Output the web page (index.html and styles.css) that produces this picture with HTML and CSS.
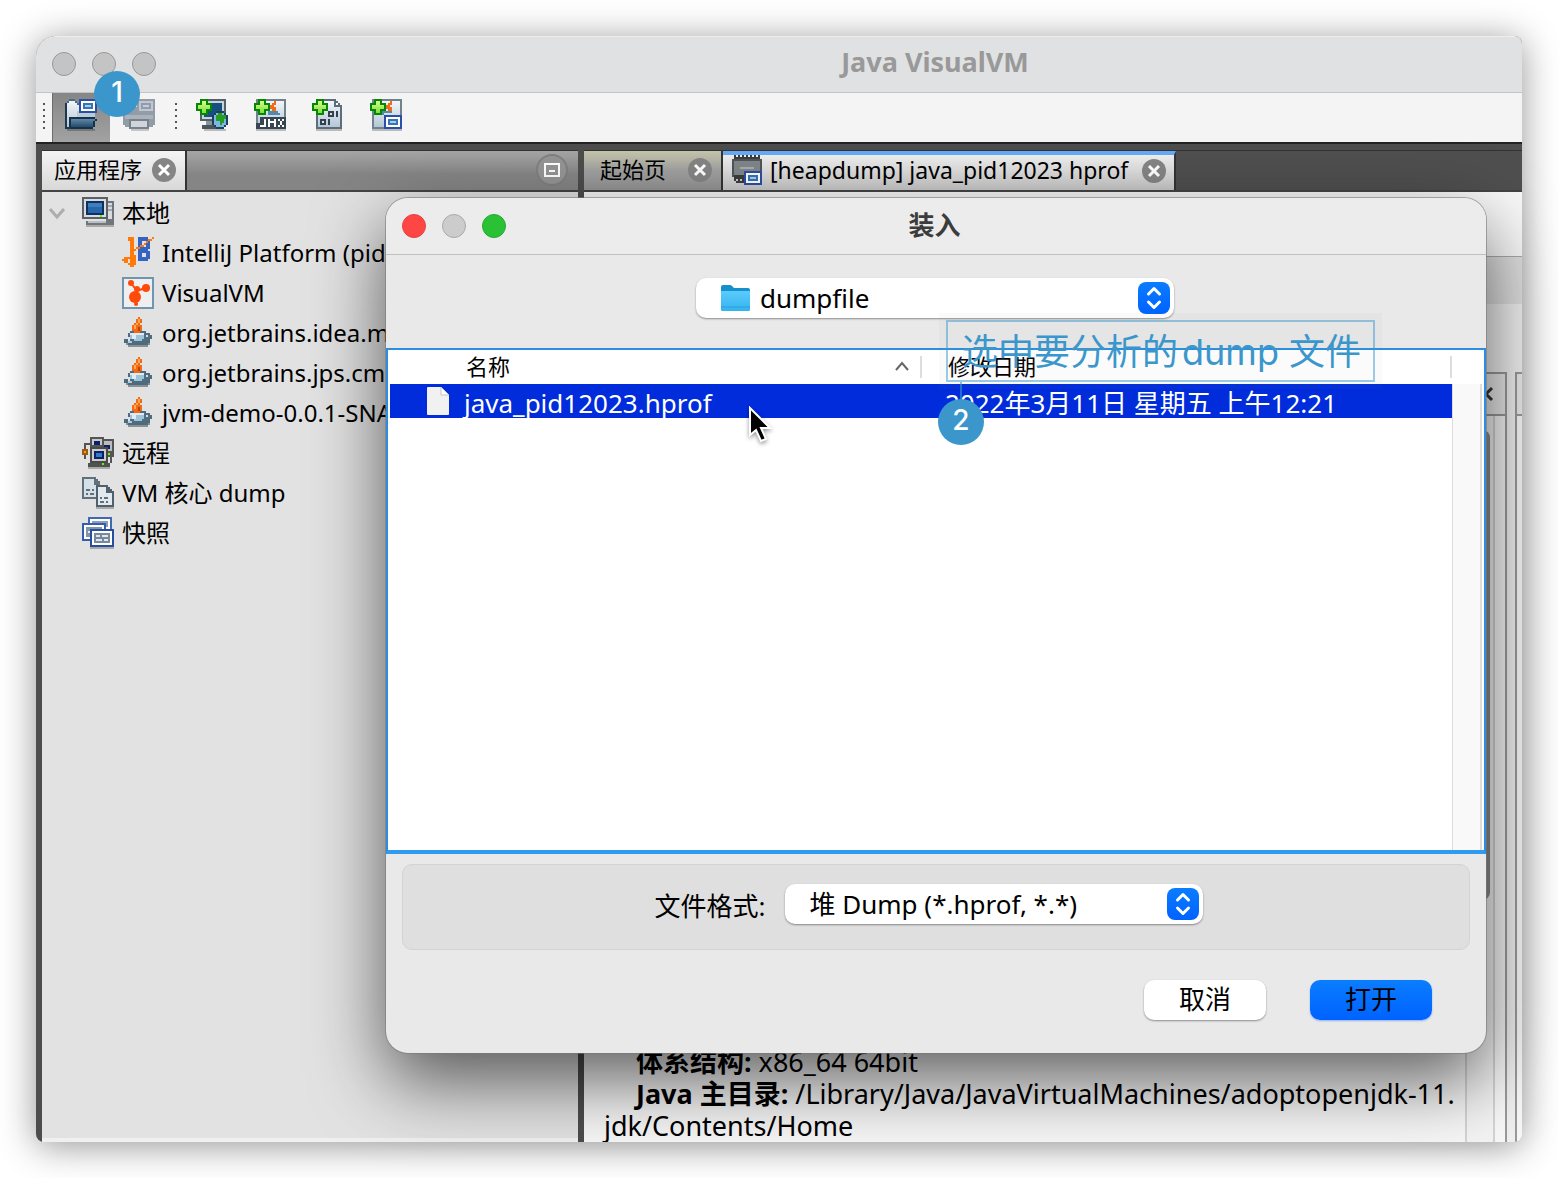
FILE: index.html
```html
<!DOCTYPE html>
<html lang="zh-CN">
<head>
<meta charset="utf-8">
<meta name="viewport" content="width=device-width, initial-scale=1">
<title>Java VisualVM</title>
<link rel="stylesheet" href="styles.css">
</head>
<body>
<svg class="defs" aria-hidden="true">
  <defs>
    <linearGradient id="plusFill" x1="0" y1="0" x2="0" y2="1"><stop offset="0" stop-color="#d9ff8c"/><stop offset="1" stop-color="#7be03a"/></linearGradient>
    <linearGradient id="steel" x1="0" y1="0" x2="0" y2="1"><stop offset="0" stop-color="#f2f6f9"/><stop offset="1" stop-color="#b4c7d6"/></linearGradient>
    <linearGradient id="navy" x1="0" y1="0" x2="0" y2="1"><stop offset="0" stop-color="#5f88a8"/><stop offset="1" stop-color="#264b6b"/></linearGradient>
    <linearGradient id="folderBlue" x1="0" y1="0" x2="0" y2="1"><stop offset="0" stop-color="#5ccbfb"/><stop offset="1" stop-color="#34b3f0"/></linearGradient>
    <symbol id="plus" viewBox="0 0 16 16">
      <path d="M2 0h4v2h2v4h-2v2h-4v-2h-2v-4h2z" fill="#078507"/>
      <path d="M3 1h2v2h2v2h-2v2h-2v-2h-2v-2h2z" fill="url(#plusFill)"/>
    </symbol>
    <symbol id="java" viewBox="0 0 16 16">
      <path d="M2 13h12v1h-1v1h-10v-1h-1z" fill="#8a9094"/>
      <path d="M1 11h2v1h10v-1h1v2h-1v1h-10v-1h-2z" fill="#4e6b7d"/>
      <path d="M3 12h9v1h-9z" fill="#a9cbdd"/>
      <path d="M3 8h1v-1h8v1h2v1h1v2h-1v1h-2v1h-7v-1h-1v-2h-1z" fill="#506d7f"/>
      <path d="M4 9h7v2h-1v1h-4v-1h-2z" fill="#9fc5da"/><path d="M5 9h2v2h-2z" fill="#dceef7"/>
      <path d="M4 8h7v1h-7z" fill="#dfe9ef"/><path d="M12 9h1v1h-1z" fill="#d5dfe5"/>
      <path d="M8 0h1v1h1v2h-1v1h1v3h-1v1h-3v-1h-1v-3h1v-1h1v-2h1z" fill="#f26a11"/>
      <path d="M8 1h1v2h-1v1h-1v2h-1v-2h1v-1h1z" fill="#ffa65a"/><path d="M8 5h1v2h-1z" fill="#b8440a"/>
    </symbol>
    <symbol id="snapbox" viewBox="0 0 16 16">
      <path d="M0 0h9v7h-9z" fill="#2a4fa8"/><path d="M1 1h7v5h-7z" fill="#fff"/><path d="M2 2h5v3h-5z" fill="#3a73b4"/><path d="M3 3h3v1h-3z" fill="#9ed0f5"/>
    </symbol>
    <symbol id="close" viewBox="0 0 24 24">
      <circle cx="12" cy="12" r="12" fill="#858585"/><path d="M7 7l10 10M17 7l-10 10" stroke="#fff" stroke-width="3"/>
    </symbol>
    <symbol id="updown" viewBox="0 0 32 32">
      <path d="M10.500 12l5.500-5.500 5.500 5.500M10.500 20l5.500 5.500 5.500-5.500" fill="none" stroke="#fff" stroke-width="3" stroke-linecap="round" stroke-linejoin="round"/>
    </symbol>
  </defs>
</svg>

<main class="window">
  <header class="titlebar">
    <div class="lights"><span class="light"></span><span class="light"></span><span class="light"></span></div>
    <h1 class="title">Java VisualVM</h1>
  </header>

  <div class="toolbar" role="toolbar">
    <span class="grip"></span>
    <button class="tool pressed" type="button" aria-label="装入">
      <svg class="px" viewBox="0 0 16 16">
        <path d="M1 15h14v1h-14z" fill="#777"/>
        <path d="M1 1h1v-1h3v1h1v1h9v12h-14z" fill="#486b87"/><path d="M1 2h1v-1h3v1h1v1h2v6h-5v5h-2z" fill="url(#steel)"/>
        <path d="M0 2h1v13h-1zM1 14h13v1h-13z" fill="#1c3850"/><path d="M6 6h9v3h-9z" fill="#b9cbd9"/>
        <path d="M3 9h12v1h1v1h-1v3h-1v1h-11v-1h-1v-5z" fill="#16324b"/><path d="M3 10h12v1h-1v3h-11z" fill="url(#navy)"/>
        <use href="#snapbox" x="7" y="0" width="16" height="16"/>
      </svg>
    </button>
    <button class="tool" type="button" disabled aria-label="打印">
      <svg class="px faded" viewBox="0 0 16 16">
        <path d="M2 4h5v3h7v-1h1v1h1v6h-1v1h-14v-1h-1v-6h2z" fill="#7a8793"/><path d="M1 8h14v2h-14z" fill="#98a4ae"/>
        <path d="M7 0h9v7h-9z" fill="#7d8796"/><path d="M8 1h7v5h-7z" fill="#b5bcc8"/><path d="M9 2h5v3h-5z" fill="#7c879e"/><path d="M10 3h3v1h-3z" fill="#b9c4d4"/>
        <path d="M3 10h10v5h-10z" fill="#596673"/><path d="M4 11h8v3h-8z" fill="#c9ced4"/><path d="M4 15h9v1h-9z" fill="#bbb"/>
      </svg>
    </button>
    <span class="grip"></span>
    <button class="tool" type="button" aria-label="添加远程主机">
      <svg class="px" viewBox="0 0 16 16">
        <path d="M2 0h13v11h-13z" fill="#56606a"/><path d="M3 1h11v9h-11z" fill="#c8d3db"/><path d="M4 2h9v7h-9z" fill="#16507f"/>
        <path d="M5 11h4v2h-4z" fill="#8a949c"/><path d="M3 13h7v2h-7z" fill="#4c545b"/><path d="M4 15h11v1h-11z" fill="#bbb"/>
        <path d="M10 6h4v1h1v1h1v5h-1v1h-1v1h-4v-1h-1v-1h-1v-5h1v-1h1z" fill="#1c3f66"/>
        <path d="M10 7h4v1h1v5h-1v1h-4v-1h-1v-5h1z" fill="#7db7df"/><path d="M11 7h2v1h2v2h-1v2h-1v1h-1v-2h-2v-3h1z" fill="#279d22"/>
        <use href="#plus" width="16" height="16"/>
      </svg>
    </button>
    <button class="tool" type="button" aria-label="添加 JMX 连接">
      <svg class="px" viewBox="0 0 16 16">
        <path d="M1 0h15v15h-15z" fill="#71828f"/><path d="M2 1h13v13h-13z" fill="url(#steel)"/>
        <path d="M10 1h1v2h-1v1h1v2h-2v-1h-1v-2h1v-1h1z" fill="#f26a11"/><path d="M7 6h5v1h1v1h-6z" fill="#5389ad"/>
        <path d="M3 9h13v6h-15v-3h2z" fill="#364652"/><path d="M5 10h1v4h-3v-1h2zM7 10h1v1h1v1h-1v2h-1zM10 10h1v4h-1v-2h-1v-1h1zM12 10h1v1h-1zM14 10h1v1h-1zM13 11h1v2h-1zM12 13h1v1h-1zM14 13h1v1h-1z" fill="#fff"/><path d="M1 15h15v1h-15z" fill="#bbb"/>
        <use href="#plus" width="16" height="16"/>
      </svg>
    </button>
    <button class="tool" type="button" aria-label="添加 VM 核心 dump">
      <svg class="px" viewBox="0 0 16 16">
        <path d="M2 0h10v1h1v1h1v1h1v12h-13z" fill="#5c6d7b"/><path d="M3 1h8v3h3v10h-11z" fill="url(#steel)"/><path d="M12 2h1v1h-1z" fill="#fff"/>
        <path d="M8 6h3v3h-3zM12 6h1v3h-1zM4 10h3v3h-3zM8 10h1v3h-1z" fill="#33424e"/><path d="M9 7h1v1h-1zM5 11h1v1h-1z" fill="#dbe5ec"/><path d="M2 15h13v1h-13z" fill="#bbb"/>
        <use href="#plus" width="16" height="16"/>
      </svg>
    </button>
    <button class="tool" type="button" aria-label="添加快照">
      <svg class="px" viewBox="0 0 16 16">
        <path d="M1 0h15v15h-15z" fill="#71828f"/><path d="M2 1h13v13h-13z" fill="url(#steel)"/>
        <path d="M10 1h1v2h-1v1h1v2h-2v-1h-1v-2h1v-1h1z" fill="#f26a11"/><path d="M6 6h5v1h-4v1h-1z" fill="#5389ad"/><path d="M1 15h15v1h-15z" fill="#bbb"/>
        <use href="#snapbox" x="7" y="8" width="16" height="16"/>
        <use href="#plus" width="16" height="16"/>
      </svg>
    </button>
  </div>

  <div class="workspace">
    <section class="sidebar">
      <div class="tabs">
        <div class="tab tab-apps"><span>应用程序</span><button class="tab-close" type="button" aria-label="关闭"><svg viewBox="0 0 24 24"><use href="#close"/></svg></button></div>
        <div class="tab-rest">
          <button class="minimize" type="button" aria-label="最小化"><svg viewBox="0 0 32 32"><circle cx="16" cy="16" r="15" fill="#959595" stroke="#808080" stroke-width="2"/><path d="M9 10h14v12H9z" fill="none" stroke="#fff" stroke-width="2"/><path d="M13 17h6" stroke="#fff" stroke-width="2"/></svg></button>
        </div>
      </div>
      <ul class="tree">
        <li class="node">
          <svg class="twisty" viewBox="0 0 16 16"><path d="M1 4l7 8 7-8" fill="none" stroke="#adadad" stroke-width="3"/></svg>
          <svg class="px" viewBox="0 0 16 16">
            <path d="M12 2h4v12h-14v-2h10z" fill="#6f777c"/><path d="M13 3h2v8h-2z" fill="#d8dcde"/><path d="M13 4h2v1h-2zM13 6h2v1h-2z" fill="#a3a9ad"/><path d="M3 12h9v1h-9z" fill="#b9bfc3"/><path d="M2 14h14v1h-14z" fill="#aaa"/>
            <path d="M0 0h13v11h-13z" fill="#5b6063"/><path d="M1 1h11v9h-11z" fill="#d9dcde"/><path d="M2 2h9v7h-9z" fill="#0d2f63"/><path d="M3 3h7v5h-7z" fill="#2567a8"/><path d="M3 3h7v2h-7z" fill="#3b7fbd"/><path d="M9 9h1v1h-1z" fill="#5f0"/>
          </svg>
          <span>本地</span>
        </li>
        <li class="node child">
          <svg class="px" viewBox="0 0 16 16">
            <path d="M8 0h5v1h1v5h-1v1h1v4h-1v1h-5z" fill="#3563c4"/><path d="M10 2h2v3h-2zM10 8h2v2h-2z" fill="#e2e2e2"/>
            <path d="M3 0h3v9h1v5h-1v1h-2v-1h-1v-1h-2v-1h-1v-1h1v-1h3v-8h-1z" fill="#ff7a0a"/><path d="M3 11h1v2h-1z" fill="#e2e2e2"/>
            <path d="M15 0h1v1h-1v1h-2v1h-1v1h-1v1h-2v1h-2v1h-1v-1h1v-1h2v-1h2v-1h1v-1h1v-1h2z" fill="#ff7a0a"/>
          </svg>
          <span>IntelliJ Platform (pid 905)</span>
        </li>
        <li class="node child">
          <svg viewBox="0 0 32 32">
            <path d="M1 1h30v30H1z" fill="#efefef" stroke="#6f96b1" stroke-width="2"/>
            <g fill="#ff4a0a"><circle cx="9" cy="6" r="3"/><circle cx="15" cy="12" r="3"/><circle cx="24" cy="11" r="4"/><circle cx="13" cy="20" r="6"/><circle cx="14" cy="27" r="2"/></g><path d="M9 6l6 8 8-3M14 14l-1 6 2 8" stroke="#ff4a0a" stroke-width="2" fill="none"/>
          </svg>
          <span>VisualVM</span>
        </li>
        <li class="node child"><svg class="px" viewBox="0 0 16 16"><use href="#java"/></svg><span>org.jetbrains.idea.maven</span></li>
        <li class="node child"><svg class="px" viewBox="0 0 16 16"><use href="#java"/></svg><span>org.jetbrains.jps.cmdline</span></li>
        <li class="node child"><svg class="px" viewBox="0 0 16 16"><use href="#java"/></svg><span>jvm-demo-0.0.1-SNAPSHOT</span></li>
        <li class="node">
          <svg class="px" viewBox="0 0 16 16">
            <path d="M1 3h3v1h-2v7h-1zM14 10h1v3h-1z" fill="#555"/><path d="M0 6h3v3h-3z" fill="#9a5a10"/><path d="M1 7h1v1h-1z" fill="#ff9a2e"/>
            <path d="M10 1h6v9h-6z" fill="#555"/><path d="M11 2h4v5h-4z" fill="#bcbcbc"/><path d="M11 4h3v2h-3z" fill="#0b1f6b"/><path d="M13 8h1v1h-1z" fill="#5f0"/>
            <path d="M4 0h7v5h-7z" fill="#555"/><path d="M5 1h5v3h-5z" fill="#c9c9c9"/><path d="M6 2h3v2h-3z" fill="#0b1f6b"/>
            <path d="M4 5h9v8h-9z" fill="#4a4a4a"/><path d="M5 6h7v6h-7z" fill="#ccc"/><path d="M6 7h5v4h-5z" fill="#0b1f6b"/><path d="M7 8h3v2h-3z" fill="#2f7cc0"/>
            <path d="M3 13h11v2h-11z" fill="#4f534f"/><path d="M10 13h1v1h-1z" fill="#5f0"/><path d="M3 15h11v1h-11z" fill="#aaa"/>
          </svg>
          <span>远程</span>
        </li>
        <li class="node">
          <svg class="px" viewBox="0 0 16 16">
            <path d="M0 0h7v1h1v1h1v9h-9z" fill="#60707d"/><path d="M1 1h5v3h2v6h-7z" fill="#d6e0e7"/><path d="M2 6h2v1h-2zM5 6h1v1h-1zM2 8h1v1h-1zM4 8h2v1h-2z" fill="#60707d"/>
            <path d="M7 4h6v1h1v1h1v1h1v8h-9z" fill="#50606d"/><path d="M8 5h4v3h3v6h-7z" fill="#e1e9ee"/><path d="M9 10h1v1h-1zM11 10h2v1h-2zM9 12h2v1h-2zM12 12h1v1h-1z" fill="#60707d"/><path d="M7 15h9v1h-9z" fill="#aaa"/>
          </svg>
          <span>VM 核心 dump</span>
        </li>
        <li class="node">
          <svg class="px" viewBox="0 0 16 16">
            <path d="M3 0h12v7h-12z" fill="#4168b5"/><path d="M4 1h10v5h-10z" fill="#fff"/><path d="M5 2h8v3h-8z" fill="#8ba0b8"/>
            <path d="M0 3h12v9h-12z" fill="#345dad"/><path d="M1 4h10v7h-10z" fill="#fff"/><path d="M2 5h8v5h-8z" fill="#8294a8"/><path d="M3 7h2v1h-2z" fill="#e5edf3"/>
            <path d="M4 6h12v9h-12z" fill="#284f9f"/><path d="M5 7h10v7h-10z" fill="#fff"/><path d="M6 8h8v5h-8z" fill="#778a9c"/><path d="M7 9h2v1h-2zM10 9h3v1h-3zM7 11h3v1h-3zM11 11h2v1h-2z" fill="#dfe8ef"/><path d="M4 15h12v1h-12z" fill="#aaa"/>
          </svg>
          <span>快照</span>
        </li>
      </ul>
    </section>

    <section class="editor">
      <div class="tabs">
        <div class="tab tab-start"><span>起始页</span><button class="tab-close" type="button" aria-label="关闭"><svg viewBox="0 0 24 24"><use href="#close"/></svg></button></div>
        <div class="tab tab-heap">
          <svg class="px" viewBox="0 0 16 16">
            <path d="M1 0h1v1h1v-1h1v1h1v-1h1v1h1v-1h1v1h1v-1h1v1h1v-1h1v1h1v-1h1v3h-13z" fill="#3c3c3c"/><path d="M0 2h15v9h-15z" fill="#50555a"/><path d="M1 3h13v7h-13z" fill="#81868a"/><path d="M4 6h7v1h-7z" fill="#a9adb0"/><path d="M1 10h7v4h-6v-1h-1z" fill="#3c3c3c"/><path d="M2 12h1v1h-1zM4 12h1v1h-1z" fill="#ccc"/>
            <use href="#snapbox" x="6" y="8" width="16" height="16"/>
          </svg>
          <span>[heapdump] java_pid12023 hprof</span><button class="tab-close" type="button" aria-label="关闭"><svg viewBox="0 0 24 24"><use href="#close"/></svg></button>
        </div>
      </div>
      <div class="strip strip-top"></div>
      <div class="strip strip-sub"></div>
      <div class="panes">
        <article class="pane summary">
          <div class="pane-head"><svg viewBox="0 0 16 16"><path d="M2 2l12 12M14 2L2 14" stroke="#333" stroke-width="3"/></svg></div>
          <div class="pane-body">
            <div class="text">
              <p><b>体系结构:</b> x86_64 64bit</p>
              <p><b>Java 主目录:</b> /Library/Java/JavaVirtualMachines/adoptopenjdk-11.</p>
              <p class="wrap">jdk/Contents/Home</p>
            </div>
            <div class="track"><div class="thumb"></div></div>
          </div>
        </article>
        <div class="pane edge"><div class="pane-head"></div></div>
      </div>
    </section>
  </div>

  <section class="dialog" role="dialog" aria-labelledby="dlg-title">
    <header class="dialog-title">
      <div class="lights"><button class="light red" type="button" aria-label="关闭"></button><button class="light" type="button" disabled aria-label="最小化"></button><button class="light green" type="button" aria-label="缩放"></button></div>
      <h2 class="title" id="dlg-title">装入</h2>
    </header>
    <div class="location">
      <div class="picker picker-folder">
        <svg class="folder" viewBox="0 0 30 28"><path d="M0 2q0-2 2-2h7q1 0 2 1l2 2h14q2 0 2 2v19q0 2-2 2H2q-2 0-2-2z" fill="#1590cc"/><path d="M0 6h29v18q0 2-2 2H2q-2 0-2-2z" fill="url(#folderBlue)"/><path d="M0 22h29" stroke="#2b9fd8"/></svg>
        <select aria-label="文件夹"><option>dumpfile</option></select>
        <svg class="arrows" viewBox="0 0 32 32"><use href="#updown"/></svg>
      </div>
    </div>
    <div class="files">
      <table class="file-table">
        <thead><tr><th class="col-name" scope="col"><div class="head-cell">名称<svg viewBox="0 0 16 16"><path d="M2 12l6-7 6 7" fill="none" stroke="#666" stroke-width="2"/></svg></div></th><th scope="col"><div class="head-cell">修改日期</div></th></tr></thead>
        <tbody><tr><td><div class="file-cell"><svg viewBox="0 0 24 30"><path d="M1 2q0-1 1-1h13l8 8v19q0 1-1 1H2q-1 0-1-1z" fill="#f1f1f1"/><path d="M15 1v8h8z" fill="#fff" stroke="#c4c4c4"/></svg><span class="cell-text">java_pid12023.hprof</span></div></td><td><div class="cell-text">2022年3月11日 星期五 上午12:21</div></td></tr></tbody>
      </table>
      <div class="file-scroll"></div>
    </div>
    <div class="format">
      <label for="fmt">文件格式:</label>
      <div class="picker picker-format">
        <select id="fmt"><option>堆 Dump (*.hprof, *.*)</option></select>
        <svg class="arrows" viewBox="0 0 32 32"><use href="#updown"/></svg>
      </div>
    </div>
    <footer class="actions">
      <button class="btn" type="button">取消</button>
      <button class="btn primary" type="button">打开</button>
    </footer>
  </section>

  <div class="note">选中要分析的<span class="note-word">dump</span> 文件</div>
  <div class="note-line"></div>
  <div class="badge badge-one">1</div>
  <div class="badge badge-two">2</div>
  <svg class="pointer" viewBox="0 0 24 38"><path d="M2 2v27l6-5 5 11 5-2-5-11h9z" fill="#000" stroke="#fff" stroke-width="2"/></svg>
</main>
</body>
</html>
```

FILE: styles.css
```css
* { box-sizing: border-box; }

body {
  margin: 0;
  padding: 36px;
  min-height: 100vh;
  display: flex;
  background: #fff;
  color: #000;
  font: 24px/32px "Noto Sans", "Noto Sans CJK SC", sans-serif;
}

h1, h2, p, ul { margin: 0; padding: 0; }
ul { list-style: none; }
button { border: 0; padding: 0; background: none; font: inherit; color: inherit; }
svg { display: block; flex: none; }
.defs { position: absolute; width: 0; height: 0; }
.px { width: 32px; height: 32px; shape-rendering: crispEdges; }

.window {
  position: relative;
  flex: 1;
  min-width: 0;
  display: flex;
  flex-direction: column;
  border-radius: 20px 8px 8px 8px;
  background: #4d4d4d;
  box-shadow: 0 4px 36px rgba(0, 0, 0, .42);
}

.titlebar, .dialog-title {
  display: grid;
  grid-template-columns: 120px 1fr 120px;
  align-items: center;
  height: 57px;
  padding: 0 16px;
}
.titlebar {
  padding-bottom: 2px;
  background: #e0e1e2;
  border-top: 1px solid #eee;
  border-bottom: 1px solid #c4c4c4;
  border-radius: 20px 8px 0 0;
}
.title { text-align: center; font-size: 26px; line-height: 32px; font-weight: 700; color: #3c3c3c; }
.titlebar .title { padding: 0 0 4px 312px; font-size: 27px; color: #999; }
.lights { display: flex; gap: 16px; }
.light { width: 24px; height: 24px; border-radius: 50%; background: #c4c4c4; border: 1px solid #999; }
.dialog .light { background: #ccc; border-color: #aaa; }
.dialog .light.red { background: #fe4645; border-color: #e8403e; }
.dialog .light.green { background: #2bc135; border-color: #25a92d; }

.toolbar {
  display: flex;
  height: 51px;
  padding-left: 7px;
  background: #f4f4f4;
  border-bottom: 2px solid #232323;
}
.grip {
  width: 2px;
  height: 28px;
  margin: 10px 7px 0 0;
  background: repeating-linear-gradient(#555 0 2px, transparent 2px 6px);
}
.tool + .grip { margin-left: 7px; margin-right: 6px; }
.tool { width: 58px; display: flex; justify-content: center; padding-top: 6px; }
.tool.pressed { padding-right: 2px; background: linear-gradient(#868686, #a2a2a2); border-left: 1px solid #6d6d6d; }
.faded { opacity: .8; }

.workspace { flex: 1; display: flex; gap: 6px; padding: 6px 0 0 6px; min-height: 0; }
.sidebar { width: 536px; flex: none; display: flex; flex-direction: column; border-bottom: 4px solid #f0f0f0; background: #e2e2e2; }
.editor { flex: 1; min-width: 0; display: flex; flex-direction: column; background: #f3f3f3; border-radius: 0 0 8px 0; overflow: hidden; }

.tabs { display: flex; height: 42px; flex: none; border-top: 1px solid #333; border-bottom: 2px solid #444; background: #4f4f4f; font-size: 22px; }
.tab { display: flex; align-items: center; padding-bottom: 2px; border-right: 2px solid #333; white-space: nowrap; }
.tab span { padding-bottom: 2px; }
.tab-close, .tab-close svg { width: 24px; height: 24px; }
.tab-apps { gap: 10px; padding: 0 9px 2px 12px; background: linear-gradient(#f4f4f4, #d8d8d8); }
.tab-rest { flex: 1; display: flex; justify-content: flex-end; align-items: center; padding: 0 10px 2px 0; background: linear-gradient(#a6a6a6, #858585 60%); }
.minimize svg { width: 32px; height: 32px; }
.tab-start { gap: 22px; padding: 0 9px 2px 16px; background: linear-gradient(#c6c6ac, #a1a1a1 50%, #949494); }
.tab-heap { gap: 6px; padding: 0 8px 4px 9px; border-top: 4px solid #66abf8; background: linear-gradient(#eee, #c8c8c8); font-size: 23px; }
.tab-heap .tab-close { margin-left: 8px; }

.tree { flex: 1; padding-top: 1px; }
.node { display: flex; align-items: center; gap: 8px; height: 40px; padding-left: 40px; white-space: nowrap; }
.node svg { width: 32px; height: 32px; }
.node .twisty { width: 16px; height: 16px; margin: 0 9px 0 -33px; }
.child { padding-left: 80px; }

.strip-top { height: 65px; background: #f8f8f8; border-bottom: 1px solid #a9a9a9; }
.strip-sub { height: 47px; background: #dedede; }
.panes { flex: 1; display: flex; gap: 8px; padding-top: 68px; background: #efefef; min-height: 0; }
.pane { border: 2px solid #999; border-width: 2px 0; border-bottom: 0; background: #f7f7f7; }
.summary { flex: 1; min-width: 0; display: flex; flex-direction: column; border-right: 2px solid #999; }
.edge { width: 7px; border-left: 2px solid #999; }
.pane-head { height: 42px; flex: none; display: flex; justify-content: flex-end; align-items: center; padding-right: 11px; border-bottom: 2px solid #999; background: #eaeaea; }
.pane-head svg { width: 16px; height: 16px; }
.pane-body { flex: 1; display: flex; padding-right: 10px; min-height: 0; }
.text { flex: 1; min-width: 0; display: flex; flex-direction: column; justify-content: flex-end; padding-left: 20px; font-size: 27px; white-space: nowrap; }
.text p { padding-left: 32px; }
.text .wrap { padding-left: 0; }
.track { width: 30px; border: 1px solid #d4d4d4; border-width: 0 2px; background: #f4f4f4; padding: 14px 3px 0 8px; }
.thumb { height: 66%; border-radius: 8px; background: #8e8e8e; }

.dialog {
  position: absolute;
  top: 162px;
  left: 350px;
  right: 36px;
  border-radius: 22px;
  background: #e9e9e9;
  box-shadow: 0 0 0 1px rgba(120, 120, 120, .6), 0 28px 72px rgba(0, 0, 0, .62);
}
.dialog-title { border-bottom: 1px solid #c0c0c0; border-radius: 22px 22px 0 0; background: #ececec; }
.dialog-title .title { padding: 0 3px 2px 0; }

.location { display: flex; justify-content: center; padding: 23px 2px 30px 0; }
.picker { position: relative; }
.picker select {
  appearance: none;
  width: 100%;
  height: 40px;
  border: 0;
  border-radius: 10px;
  background: #fff;
  color: #000;
  font: 26px/32px "Noto Sans", "Noto Sans CJK SC", sans-serif;
  box-shadow: 0 1px 2px rgba(0, 0, 0, .4);
}
.picker-folder { width: 478px; }
.picker-folder select { padding: 0 40px 0 64px; }
.picker-format { width: 418px; }
.picker-format select { padding: 0 40px 0 24px; }
.folder { position: absolute; left: 25px; top: 7px; width: 30px; height: 28px; }
.arrows { position: absolute; right: 4px; top: 4px; width: 32px; height: 32px; border-radius: 8px; background: linear-gradient(#0a7dff, #0062ff); pointer-events: none; }

.files { display: flex; height: 506px; border: 2px solid #2a8fe2; border-bottom: 4px solid #2f9bf0; padding-left: 2px; background: #fff; }
.file-table { flex: 1; align-self: flex-start; border-collapse: collapse; table-layout: fixed; }
.file-table th, .file-table td { padding: 0; height: 34px; text-align: left; white-space: nowrap; }
.col-name { width: 532px; }
.file-table th { padding: 0 0 0 26px; font-size: 22px; font-weight: 400; }
.file-table .col-name { padding-left: 76px; }
.head-cell { display: flex; justify-content: space-between; align-items: center; height: 22px; border-right: 2px solid #ddd; padding-right: 10px; line-height: 18px; padding-bottom: 3px; }
.head-cell svg { width: 16px; height: 16px; }
.file-table tbody { background: #002cdb; color: #fff; font-size: 26px; }
.file-table td + td { padding-left: 23px; }
.cell-text { padding-top: 4px; line-height: 30px; }
.file-cell { display: flex; align-items: center; gap: 14px; padding-left: 36px; }
.file-cell svg { width: 24px; height: 30px; }
.file-scroll { width: 30px; margin: 34px 2px 0 0; border: 1px solid #ddd; border-width: 0 2px 0 1px; background: #f9f9f9; }

.format { display: flex; justify-content: center; align-items: center; gap: 20px; height: 86px; margin: 10px 16px 0; padding: 0 14px 6px 0; border: 1px solid #d3d3d3; border-radius: 10px; background: #dfdfdf; font-size: 26px; }
.format label { padding-top: 4px; }
.actions { display: flex; justify-content: flex-end; gap: 44px; padding: 30px 54px 33px; }
.btn { width: 122px; height: 40px; padding-bottom: 2px; border-radius: 10px; background: #fff; font-size: 26px; line-height: 38px; box-shadow: 0 1px 2px rgba(0, 0, 0, .4); }
.btn.primary { background: linear-gradient(#0a7dff, #0062ff); box-shadow: 0 1px 2px rgba(0, 98, 255, .4); }

.note {
  position: absolute;
  left: 910px;
  top: 284px;
  padding: 2px 12px 0 14px;
  border: 2px solid rgba(59, 151, 203, .5);
  color: #3b97cb;
  font: 36px/56px Inter, "Noto Sans CJK SC", sans-serif;
  white-space: nowrap;
  box-shadow: 0 0 0 7px rgba(128, 128, 128, .04);
  background: rgba(128, 128, 128, .03);
}
.note-word { margin-left: 4px; }
.note-line { position: absolute; left: 924px; top: 346px; width: 2px; height: 18px; background: rgba(59, 151, 203, .6); }
.badge {
  position: absolute;
  width: 46px;
  height: 46px;
  border-radius: 50%;
  background: #3b97cb;
  color: #fff;
  font: 500 28px/42px Inter, sans-serif;
  text-align: center;
}
.badge-one { left: 58px; top: 35px; }
.badge-two { left: 902px; top: 363px; }
.pointer { position: absolute; left: 712px; top: 370px; width: 24px; height: 38px; filter: drop-shadow(0 2px 2px rgba(0, 0, 0, .4)); }
```
